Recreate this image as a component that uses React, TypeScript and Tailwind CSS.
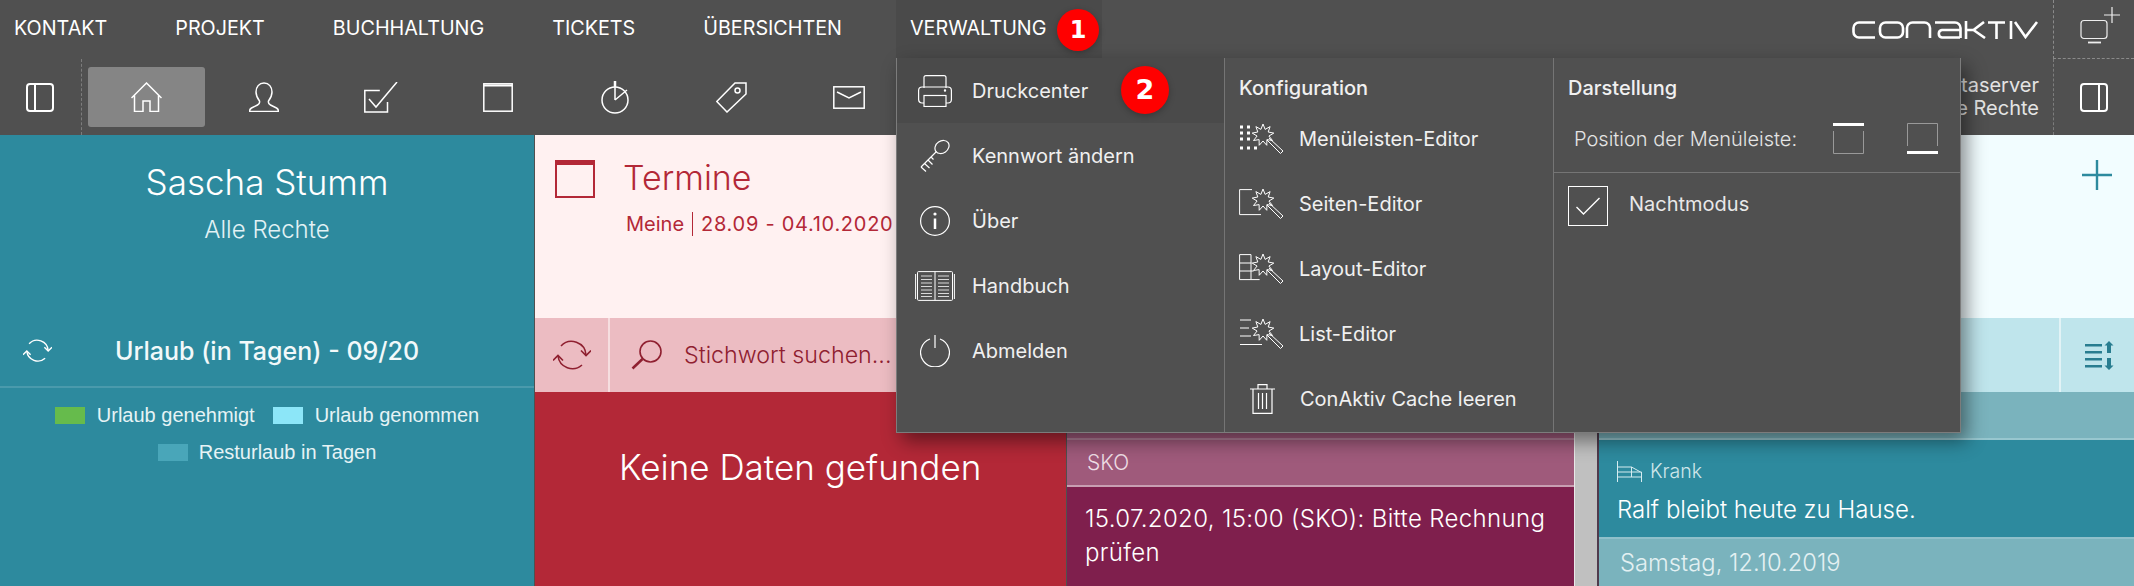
import React from "react";

const font = { fontFamily: "Inter, 'Noto Sans', sans-serif" };

const Line: React.FC<{ w: number; h: number; c?: string; sw?: number; children: React.ReactNode }> = ({
  w,
  h,
  c = "#ffffff",
  sw = 1.5,
  children,
}) => (
  <svg width={w} height={h} viewBox={`0 0 ${w} ${h}`} fill="none" stroke={c} strokeWidth={sw} className="block shrink-0">
    {children}
  </svg>
);

const starPoints = (() => {
  const pts: string[] = [];
  for (let i = 0; i < 18; i++) {
    const r = i % 2 === 0 ? 11 : 6;
    const a = (i * Math.PI) / 9;
    pts.push(`${(24 + r * Math.sin(a)).toFixed(1)},${(11 - r * Math.cos(a)).toFixed(1)}`);
  }
  return pts.join(" ");
})();

const Wand: React.FC<{ children: React.ReactNode }> = ({ children }) => (
  <Line w={45} h={30} sw={1}>
    <polygon points={starPoints} />
    <path d="M30 14l14 13-2.500 2.500L28 16" />
    {children}
  </Line>
);

const PanelIcon: React.FC<{ right?: boolean }> = ({ right }) => (
  <Line w={28} h={29} sw={2}>
    <rect x="1" y="1" width="26" height="27" rx="3" />
    <path d={right ? "M19 1v27" : "M9 1v27"} />
  </Line>
);

const RefreshIcon: React.FC<{ c: string; w: number; h: number }> = ({ c, w, h }) => (
  <svg width={w} height={h} viewBox="0 0 38 31" fill="none" stroke={c} strokeWidth={w > 30 ? 1.6 : 1.8} className="block shrink-0">
    <path d="M8 6A14.500 14.500 0 0 1 33 15M29 25A14.500 14.500 0 0 1 5 16" />
    <path d="M28 10.500l5 5 5-5M0 20.500l5-5 5 5" />
  </svg>
);

const navItems = ["KONTAKT", "PROJEKT", "BUCHHALTUNG", "TICKETS", "ÜBERSICHTEN"];

const toolbarIcons = [
  <Line w={31} h={30} key="home">
    <path d="M.5 16L15.500 1l15 15M3.500 13v16.500H12V19h7v10.500h8.500V13" />
  </Line>,
  <Line w={30} h={30} key="person">
    <path d="M15 1c-5 0-8 4-8 9 0 4 2 7 3.500 9 .5 2 0 3-2 4l-6 3c-1.500.8-2 2-2 3.500h29c0-1.500-.5-2.700-2-3.500l-6-3c-2-1-2.500-2-2-4 1.500-2 3.500-5 3.500-9 0-5-3-9-8-9z" />
  </Line>,
  <Line w={34} h={31} key="check">
    <path d="M23.500 20v10H.8V8.500h15M5 17l7 8L33 0" />
  </Line>,
  <Line w={30} h={29} key="cal">
    <rect x=".8" y=".8" width="28.400" height="27.400" />
    <path d="M1 2.500h28" strokeWidth="2" />
  </Line>,
  <Line w={28} h={33} key="clock">
    <circle cx="14" cy="19" r="13" />
    <path d="M14 19V0M14 19l12-10" />
    <path d="M14 0v6" strokeWidth="2.500" />
  </Line>,
  <Line w={31} h={31} key="tag">
    <path d="M30 1v11L11 30 .8 19.500 19 1z" />
    <circle cx="21.500" cy="8.500" r="2.500" />
  </Line>,
  <Line w={32} h={23} key="mail">
    <rect x=".8" y=".8" width="30.400" height="21.400" />
    <path d="M4 6l12 6 12-6" />
  </Line>,
];

const leftMenu: [string, React.ReactNode][] = [
  [
    "Druckcenter",
    <Line w={34} h={32} sw={1.2} key="p">
      <path d="M6 13V2.500Q6 .6 8 .6h18q2 0 2 1.900V13" />
      <rect x=".6" y="12" width="32.800" height="16" rx="3.500" />
      <rect x="6" y="20.500" width="22" height="11" fill="#4a4a4a" />
      <circle cx="27" cy="15.500" r=".6" fill="#fff" />
    </Line>,
  ],
  [
    "Kennwort ändern",
    <Line w={30} h={33} sw={1.2} key="k">
      <ellipse cx="22" cy="8" rx="7.500" ry="6" transform="rotate(-35 22 8)" />
      <path d="M16.500 12.500L1 28M1 28l5 4.500M4.500 24.500l5 4.500M8 21l4.500 4.500M11 18l2.500 2.500" />
    </Line>,
  ],
  [
    "Über",
    <Line w={30} h={30} sw={1.2} key="i">
      <circle cx="15" cy="15" r="14.400" />
      <path d="M15 12.500V23" strokeWidth="2.500" />
      <circle cx="15" cy="8" r="1.600" fill="#fff" stroke="none" />
    </Line>,
  ],
  [
    "Handbuch",
    <Line w={40} h={30} sw={1} key="b">
      <rect x="2.500" y=".6" width="35" height="28.800" rx="1" />
      <path d="M20 .6v28.800M.6 3v25M39.400 3v25" />
      <path
        d="M6 5h11M6 8.500h11M6 12h11M6 15.500h11M6 19h11M6 22.500h11M6 25.500h11M23 5h11M23 8.500h11M23 12h11M23 15.500h11M23 19h11M23 22.500h11M23 25.500h11"
        stroke="#d8d8d8"
      />
    </Line>,
  ],
  [
    "Abmelden",
    <Line w={30} h={32} sw={1.2} key="o">
      <path d="M10 4a14.400 14.400 0 1 0 10 0" />
      <path d="M15 0v13" />
    </Line>,
  ],
];

const configMenu: [string, React.ReactNode][] = [
  [
    "Menüleisten-Editor",
    <Wand key="m">
      <path d="M1 3h3M8 3h3M1 9h3M8 9h3M1 15h3M8 15h3M1 24h3M8 24h3M15 24h3" strokeWidth="3" />
    </Wand>,
  ],
  [
    "Seiten-Editor",
    <Wand key="s">
      <path d="M13 .6H.6v25H22" />
    </Wand>,
  ],
  [
    "Layout-Editor",
    <Wand key="l">
      <path d="M12 .6H.6v25h20M.6 9h12M.6 17h14M12 .6V25" />
    </Wand>,
  ],
  [
    "List-Editor",
    <Wand key="e">
      <path d="M1 1h11M1 9h9M1 17h11M1 25.500h22" />
    </Wand>,
  ],
];

const Logo = () => (
  <svg width="187" height="18" viewBox="0 0 187 18" fill="none" stroke="#fff" strokeWidth="2.600" className="block">
    <path d="M23 1.500H7a5.500 5.500 0 0 0-5.500 5.500v4a5.500 5.500 0 0 0 5.500 5.500h16" />
    <rect x="28" y="1.500" width="23" height="15" rx="5.500" />
    <path d="M55 17V7a5.500 5.500 0 0 1 5.500-5.500h12A5.500 5.500 0 0 1 78 7v10" />
    <path d="M83 1.500h20a5.500 5.500 0 0 1 5.500 5.500v10M108 9H90a3.800 3.800 0 0 0 0 7.500h18" />
    <path d="M114 0v18M114.500 9h7L132 1M121.500 9L133 17" />
    <path d="M136 1.500h17M144.500 1.500V18M159 0v18M163 1l10.500 15L185 1" />
  </svg>
);

const Badge: React.FC<{ n: number; cls: string }> = ({ n, cls }) => (
  <div
    className={`absolute flex items-center justify-center rounded-full bg-[#ff0000] font-bold text-white shadow-[0_2px_6px_rgba(0,0,0,0.25)] ${cls}`}
    style={{ fontFamily: "'DejaVu Sans', sans-serif" }}
  >
    {n}
  </div>
);

const App: React.FC = () => {
  return (
    <div className="relative flex h-[586px] w-[2134px] flex-col overflow-hidden bg-[#505050]" style={font}>
      {/* Top menu */}
      <div className="flex h-[59px] shrink-0 items-stretch text-[19.750px] text-white">
        <div className="flex w-[1102px] shrink-0 justify-between">
          {navItems.map((item) => (
            <div key={item} className="flex h-[58px] items-center px-[14px]">
              {item}
            </div>
          ))}
          <div className="flex h-[58px] w-[206px] items-center bg-[#4a4a4a] px-[14px]">VERWALTUNG</div>
        </div>
        <div className="ml-auto flex items-center pr-[14px]">
          <Logo />
        </div>
        <div className="flex w-[81px] items-start border-b border-l border-dashed border-[#8a8a8a] pl-[26px] pt-[7px]">
          <svg width="40" height="37" viewBox="0 0 40 37" fill="none" stroke="#eee" strokeWidth="1.200" className="block">
            <rect x="1" y="13.500" width="26" height="18" rx="3" />
            <path d="M8 35.500h13" strokeWidth="1.800" />
            <path d="M32 0v16M24 8h16" />
          </svg>
        </div>
      </div>

      {/* Toolbar */}
      <div className="flex h-[76px] shrink-0 items-center">
        <div className="flex h-full w-[82px] items-center justify-center border-r border-dashed border-[#7c7c7c] pr-[2px] pt-[1px]">
          <PanelIcon />
        </div>
        <div className="ml-[6px] flex">
          {toolbarIcons.map((icon, i) => (
            <div
              key={i}
              className={`flex h-[60px] w-[117px] items-center justify-center rounded-[3px] ${i === 0 ? "bg-[#858585]" : ""}`}
            >
              {icon}
            </div>
          ))}
        </div>
        <div className="ml-auto pr-[14px] text-right text-[20px] leading-[23px] text-[#e4e4e4]">
          <div>Dataserver</div>
          <div>Alle Rechte</div>
        </div>
        <div className="flex h-full w-[81px] items-center justify-center border-l border-dashed border-[#7c7c7c] pt-[1px]">
          <PanelIcon right />
        </div>
      </div>

      {/* Panels */}
      <div className="flex min-h-0 flex-1">
        <section className="flex w-[534px] flex-col bg-[#2d8a9e] text-white">
          <div className="h-[183px] pt-[27px] text-center">
            <div className="text-[35px] font-light leading-[40px]">Sascha Stumm</div>
            <div className="mt-[14px] text-[24px] font-light leading-[28px] text-[#e2f2f5]">Alle Rechte</div>
          </div>
          <div className="relative flex h-[70px] items-center border-b-2 border-[#4a9aac] pb-[2px] pl-[23px]">
            <RefreshIcon c="#ffffff" w={29} h={24} />
            <div className="absolute left-0 right-0 text-center text-[25px] font-medium leading-none text-[#f2f9fa]">
              Urlaub (in Tagen) - 09/20
            </div>
          </div>
          <div
            className="flex flex-wrap justify-center gap-x-[18px] gap-y-[20px] px-[30px] pt-[19px] text-[20px] leading-[17px] text-[#e6f3f5]"
            style={{ fontFamily: "'Liberation Sans', sans-serif" }}
          >
            <div className="flex items-center gap-[12px]">
              <span className="h-[17px] w-[30px] bg-[#66bb4c]" />
              Urlaub genehmigt
            </div>
            <div className="flex items-center gap-[12px]">
              <span className="h-[17px] w-[30px] bg-[#8ce6f8]" />
              Urlaub genommen
            </div>
            <div className="flex items-center gap-[11px]">
              <span className="h-[17px] w-[30px] bg-[#49a6b9]" />
              Resturlaub in Tagen
            </div>
          </div>
        </section>

        <section className="ml-[1px] flex w-[531px] flex-col bg-[#b32837]">
          <div className="flex h-[183px] gap-[28px] bg-[#fff1f1] pl-[20px] pt-[25px] text-[#b32837]">
            <svg width="40" height="38" viewBox="0 0 40 38" fill="none" stroke="#b32837" strokeWidth="2" className="block shrink-0">
              <rect x="1" y="1" width="38" height="36" />
              <path d="M1 3h38" strokeWidth="4" />
            </svg>
            <div className="-mt-[1px]">
              <div className="text-[34px] font-light leading-[38px]">Termine</div>
              <div className="ml-[3px] mt-[15px] flex items-center text-[20px] leading-[24px]">
                Meine
                <span className="mx-[8px] h-[24px] w-[1px] bg-[#b32837]" />
                <span className="tracking-[0.720px]">28.09 - 04.10.2020</span>
              </div>
            </div>
          </div>
          <div className="flex h-[74px] items-center bg-[#ecbcc2] text-[#8f2030]">
            <div className="flex h-full w-[75px] items-center justify-center border-r-2 border-[#f6dee0]">
              <RefreshIcon c="#8f2030" w={38} h={31} />
            </div>
            <svg width="31" height="30" viewBox="0 0 31 30" fill="none" stroke="#8f2030" strokeWidth="1.600" className="ml-[21px] block shrink-0">
              <circle cx="19.500" cy="11.500" r="10.500" />
              <path d="M11.500 19L1.500 28.500" strokeWidth="2.500" />
            </svg>
            <div className="ml-[22px] whitespace-nowrap text-[23.250px] font-light">Stichwort suchen...</div>
          </div>
          <div className="pl-[84px] pt-[53px] text-[35px] font-light leading-[44px] text-white">Keine Daten gefunden</div>
        </section>

        <section className="ml-[1px] flex w-[508px] flex-col border-r border-[#e8e8e8] bg-[#7f1f4d] text-white">
          <div className="h-[305px] border-b-2 border-[#b07f97] bg-[#9f5a7b]" />
          <div className="flex h-[47px] items-center border-b-2 border-[#c89fb2] bg-[#9f5a7b] pl-[20px] text-[21px] font-light text-[#eedde5]">
            SKO
          </div>
          <div className="pl-[18px] pr-[14px] pt-[15px] text-[24px] font-light leading-[34px] tracking-[0.350px]">
            15.07.2020, 15:00 (SKO): Bitte Rechnung prüfen
          </div>
        </section>

        <div className="w-[24px] border-r-2 border-[#4f3a4c] bg-[#c0c0c0]" />

        <section className="flex flex-1 flex-col text-white">
          <div className="flex h-[183px] justify-end bg-[#f2fdff] pr-[22px] pt-[25px]">
            <svg width="30" height="30" viewBox="0 0 30 30" stroke="#2d8a9e" strokeWidth="2.400" className="block">
              <path d="M15 0v30M0 15h30" />
            </svg>
          </div>
          <div className="flex h-[74px] justify-end bg-[#bfe5ec]">
            <div className="flex w-[75px] items-center justify-center border-l-2 border-[#e2f3f6] pl-[3px]">
              <svg width="29" height="29" viewBox="0 0 29 29" fill="#287d90" stroke="none" className="block">
                <path d="M0 3h17v2.500H0zM0 10h17v2.500H0zM0 17h17v2.500H0zM0 24h17v2.500H0z" />
                <path d="M24 0l4.500 4.500H26V12h-4V4.500h-2.500zM24 29l-4.500-4.500H22V17h4v7.500h2.500z" />
              </svg>
            </div>
          </div>
          <div className="h-[48px] border-b-2 border-[#98c7cf] bg-[#7ab3bd]" />
          <div className="h-[99px] border-b-2 border-[#8fc0ca] bg-[#2d8a9e] pl-[18px] pt-[20px]">
            <div className="flex items-center gap-[8px] text-[19.500px] font-light leading-[22px] text-[#cfe6ea]">
              <svg width="25" height="21" viewBox="0 0 25 21" fill="none" stroke="#d6ecf0" strokeWidth="1" className="block">
                <path d="M.5 0v21M.5 6h14v10M.5 11h24v5M.5 16h24v5M14.500 6l9 5" />
              </svg>
              Krank
            </div>
            <div className="mt-[13px] text-[24px] font-light leading-[30px]">Ralf bleibt heute zu Hause.</div>
          </div>
          <div className="flex flex-1 items-center bg-[#7ab3bd] pl-[21px] text-[23.750px] font-light text-[#e3f0f2]">
            Samstag, 12.10.2019
          </div>
        </section>
      </div>

      {/* Verwaltung dropdown */}
      <div className="absolute left-[896px] top-[58px] flex h-[375px] w-[1065px] border-x border-b border-[#7c7c7c] bg-[#505050] text-[20px] text-[#f0f0f0] shadow-[6px_8px_18px_rgba(0,0,0,0.45)]">
        <div className="w-[328px] shrink-0 border-r border-[#757575]">
          {leftMenu.map(([label, icon], i) => (
            <div key={label} className={`flex h-[65px] items-center ${i === 0 ? "bg-[#4a4a4a]" : ""}`}>
              <div className="flex w-[75px] justify-center pl-[1px]">{icon}</div>
              <span>{label}</span>
            </div>
          ))}
        </div>
        <div className="w-[329px] shrink-0 border-r border-[#757575]">
          <div className="flex h-[48px] items-end pb-[3px] pl-[14px] font-medium">Konfiguration</div>
          {configMenu.map(([label, icon]) => (
            <div key={label} className="flex h-[65px] items-center pl-[14px]">
              {icon}
              <span className="ml-[15px]">{label}</span>
            </div>
          ))}
          <div className="flex h-[65px] items-center pl-[25px]">
            <Line w={25} h={30} sw={1.2}>
              <path d="M0 5h25M8 5V.6h9V5M3 5v24.400h19V5M8.500 9v16M12.500 9v16M16.500 9v16" />
            </Line>
            <span className="ml-[25px]">ConAktiv Cache leeren</span>
          </div>
        </div>
        <div className="flex-1">
          <div className="h-[115px] border-b border-[#757575]">
            <div className="flex h-[48px] items-end pb-[3px] pl-[14px] font-medium">Darstellung</div>
            <div className="mt-[17px] flex h-[31px] items-center pl-[20px] text-[#e4e4e4]">
              <span className="w-[259px] whitespace-nowrap font-light">Position der Menüleiste:</span>
              <Line w={31} h={31} c="#999999" sw={1}>
                <path d="M.5 8v22.500h30V8" />
                <path d="M0 1.500h31" stroke="#fff" strokeWidth="3" />
              </Line>
              <div className="ml-[43px]">
                <Line w={31} h={31} c="#999999" sw={1}>
                  <path d="M.5 23V.5h30V23" />
                  <path d="M0 29.500h31" stroke="#fff" strokeWidth="3" />
                </Line>
              </div>
            </div>
          </div>
          <div className="flex items-center pl-[14px] pt-[13px]">
            <div className="flex h-[40px] w-[40px] items-center justify-center border border-white">
              <svg width="24" height="19" viewBox="0 0 24 19" fill="none" stroke="#fff" strokeWidth="1.400" className="block">
                <path d="M.5 10l7 7L23.500 1" />
              </svg>
            </div>
            <span className="-mt-[4px] ml-[21px] text-[#e8e8e8]">Nachtmodus</span>
          </div>
        </div>
      </div>

      <Badge n={1} cls="left-[1057px] top-[9px] h-[42px] w-[42px] text-[24px]" />
      <Badge n={2} cls="left-[1121px] top-[66px] h-[48px] w-[48px] text-[27px]" />
    </div>
  );
};

export default App;
